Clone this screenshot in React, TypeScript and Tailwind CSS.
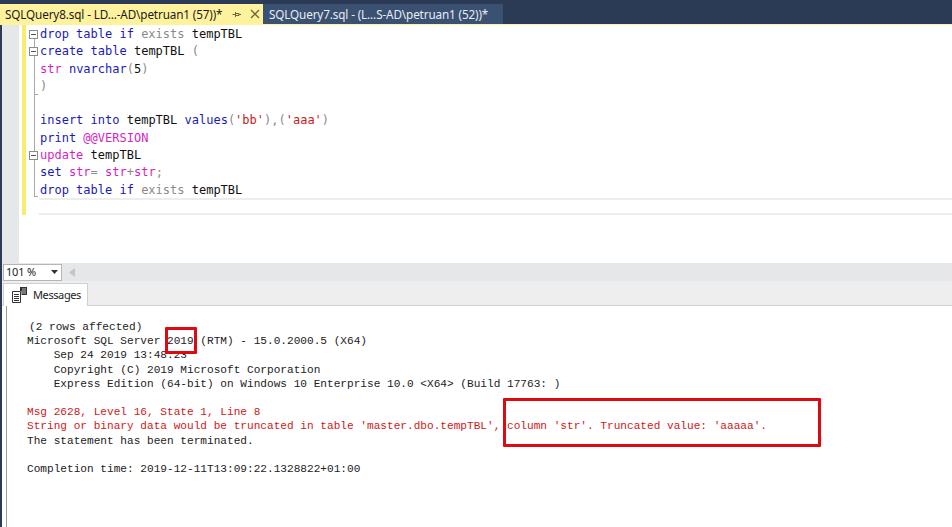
import React from 'react'

const KW = 'text-[#1a1ab8]'
const GR = 'text-[#8a8a8a]'
const PK = 'text-[#d61fc4]'
const ST = 'text-[#c8201c]'
const BK = 'text-[#111111]'

type Seg = [string, string]

const codeLines: Array<{ segs: Seg[]; fold?: boolean }> = [
  { fold: true, segs: [['drop table if', KW], [' exists ', GR], ['tempTBL', BK]] },
  { fold: true, segs: [['create table', KW], [' tempTBL ', BK], ['(', GR]] },
  { segs: [['str', PK], [' nvarchar', KW], ['(', GR], ['5', BK], [')', GR]] },
  { segs: [[')', GR]] },
  { segs: [[' ', BK]] },
  { segs: [['insert into', KW], [' tempTBL ', BK], ['values', KW], ['(', GR], ["'bb'", ST], ['),(', GR], ["'aaa'", ST], [')', GR]] },
  { segs: [['print', KW], [' @@VERSION', PK]] },
  { fold: true, segs: [['update', PK], [' tempTBL', BK]] },
  { segs: [['set', KW], [' str', PK], ['= ', GR], ['str', PK], ['+', GR], ['str', PK], [';', GR]] },
  { segs: [['drop table if', KW], [' exists ', GR], ['tempTBL', BK]] },
]

const output: Array<{ text: string; red?: boolean; indent?: boolean }> = [
  { text: '(2 rows affected)', indent: true },
  { text: 'Microsoft SQL Server 2019 (RTM) - 15.0.2000.5 (X64)' },
  { text: '    Sep 24 2019 13:48:23' },
  { text: '    Copyright (C) 2019 Microsoft Corporation' },
  { text: '    Express Edition (64-bit) on Windows 10 Enterprise 10.0 <X64> (Build 17763: )' },
  { text: ' ' },
  { text: 'Msg 2628, Level 16, State 1, Line 8', red: true },
  { text: "String or binary data would be truncated in table 'master.dbo.tempTBL', column 'str'. Truncated value: 'aaaaa'.", red: true },
  { text: 'The statement has been terminated.' },
  { text: ' ' },
  { text: 'Completion time: 2019-12-11T13:09:22.1328822+01:00' },
]

const FoldBox = () => (
  <svg width="9" height="9" viewBox="0 0 9 9" className="absolute left-[-6px] top-[4px]">
    <rect x="0.5" y="0.5" width="8" height="8" fill="#fff" stroke="#8c8c8c" />
    <path d="M2 4.5h5" stroke="#555" />
  </svg>
)

const MessagesIcon = () => (
  <svg width="15" height="16" viewBox="0 0 15 16" className="shrink-0">
    <path d="M0.5 4.5h8v11h-8z" fill="#fff" stroke="#333" />
    <path d="M2 7.5h5M2 9.5h5M2 11.5h5M2 13.5h5" stroke="#333" />
    <path d="M8 0h7v8H9.5V4H8z" fill="#333" />
    <path d="M10 2h4M10 4h4M10 6h4" stroke="#bbb" />
  </svg>
)

export default function App() {
  return (
    <div className="relative flex flex-col w-[952px] h-[527px] overflow-hidden bg-white font-['Noto_Sans',sans-serif]">
      <div className="h-[4px] shrink-0 bg-[#2b3a55]" />

      <div className="flex h-[21px] shrink-0 bg-[#2b3a55] border-b-[1px] border-[#fff29d] text-[11.7px] leading-[20px] tracking-[-0.12px]">
        <div className="flex items-center w-[263px] pl-[5px] bg-[#fff29d] text-[#1a1a1a]">
          <span className="w-[227px] whitespace-nowrap">SQLQuery8.sql - LD...-AD\petruan1 (57))*</span>
          <svg width="9" height="9" viewBox="0 0 9 9">
            <path d="M3.5 2v5M3.5 3.5h3.5v2H3.5M0.5 4.5h3M7 4.5h2" stroke="#6b6440" fill="none" />
          </svg>
          <svg width="10" height="10" viewBox="0 0 10 10" className="ml-[9px]">
            <path d="M1 1l8 8M9 1l-8 8" stroke="#6b6440" strokeWidth="1.3" />
          </svg>
        </div>
        <div className="w-[240px] pl-[6px] bg-[#3b5172] text-[#e8edf4] whitespace-nowrap">
          SQLQuery7.sql - (L...S-AD\petruan1 (52))*
        </div>
      </div>

      <div className="flex flex-1 min-h-0">
        <div className="w-[2px] shrink-0 bg-[#2b3a55]" />
        <div className="flex flex-col flex-1 min-w-0">
          <div className="flex h-[238px] shrink-0">
            <div className="w-[17px] shrink-0 bg-[#e6e7e8]" />
            <div className="w-[3px] shrink-0 bg-white" />
            <div className="w-[4px] h-[190px] shrink-0 bg-[#f7ec6e]" />
            <div className="relative flex-1 pl-[9px] pt-[1px] font-['DejaVu_Sans_Mono',monospace] text-[12px] leading-[17.3px]">
              <div className="absolute left-[8px] top-[12px] w-px h-[160px] bg-[#a8a8a8]" />
              <div className="absolute left-[8px] top-[69px] w-[4px] h-px bg-[#a8a8a8]" />
              <div className="absolute left-[8px] top-[171px] w-[4px] h-px bg-[#a8a8a8]" />
              <div className="absolute left-[13px] right-0 top-[173px] h-[17px] border-y-2 border-[#ededed]" />
              {codeLines.map((line, i) => (
                <div key={i} className="relative h-[17.3px] pl-[5px] whitespace-pre">
                  {line.fold && <FoldBox />}
                  {line.segs.map(([text, color], j) => (
                    <span key={j} className={color}>{text}</span>
                  ))}
                </div>
              ))}
            </div>
          </div>

          <div className="flex items-center h-[18px] shrink-0 bg-[#e6e7e8]">
            <div className="flex items-center justify-between w-[59px] h-[17px] ml-[1px] px-[2px] bg-white border border-[#b5b5b5] text-[11px] tracking-[-0.2px] text-[#1a1a1a]">
              <span>101 %</span>
              <svg width="7" height="4" viewBox="0 0 7 4" className="mr-[1px]"><path d="M0 0h7L3.5 4z" fill="#333" /></svg>
            </div>
            <svg width="6" height="9" viewBox="0 0 6 9" className="ml-[7px]"><path d="M6 0v9L0 4.5z" fill="#c4c5c8" /></svg>
          </div>

          <div className="flex items-end h-[25px] shrink-0 pl-[1px] bg-[#eeeeef] border-b border-[#d0d0d0]">
            <div className="flex items-center gap-[6px] w-[85px] h-[23px] -mb-px pl-[8px] bg-white border-x border-t border-[#d0d0d0] text-[11px] tracking-[-0.4px] text-[#222222]">
              <MessagesIcon />
              <span>Messages</span>
            </div>
          </div>

          <div className="flex-1 min-h-0 ml-[4px] pl-[20px] pt-[14px] border-l border-[#9a9a9a] font-['Liberation_Mono',monospace] text-[11.12px] leading-[14.2px] text-[#222222]">
            {output.map((line, i) => (
              <div key={i} className={`whitespace-pre ${line.red ? 'text-[#d01818]' : ''} ${line.indent ? 'pl-[2px]' : ''}`}>{line.text}</div>
            ))}
          </div>
        </div>
      </div>

      {/* red annotation boxes drawn over the screenshot */}
      <div className="absolute left-[165px] top-[327px] w-[32px] h-[27px] border-[3px] border-[#dd0a12] rounded-[1px]" />
      <div className="absolute left-[503px] top-[398px] w-[318px] h-[49px] border-[3px] border-[#dd0a12] rounded-[1px]" />
    </div>
  )
}
